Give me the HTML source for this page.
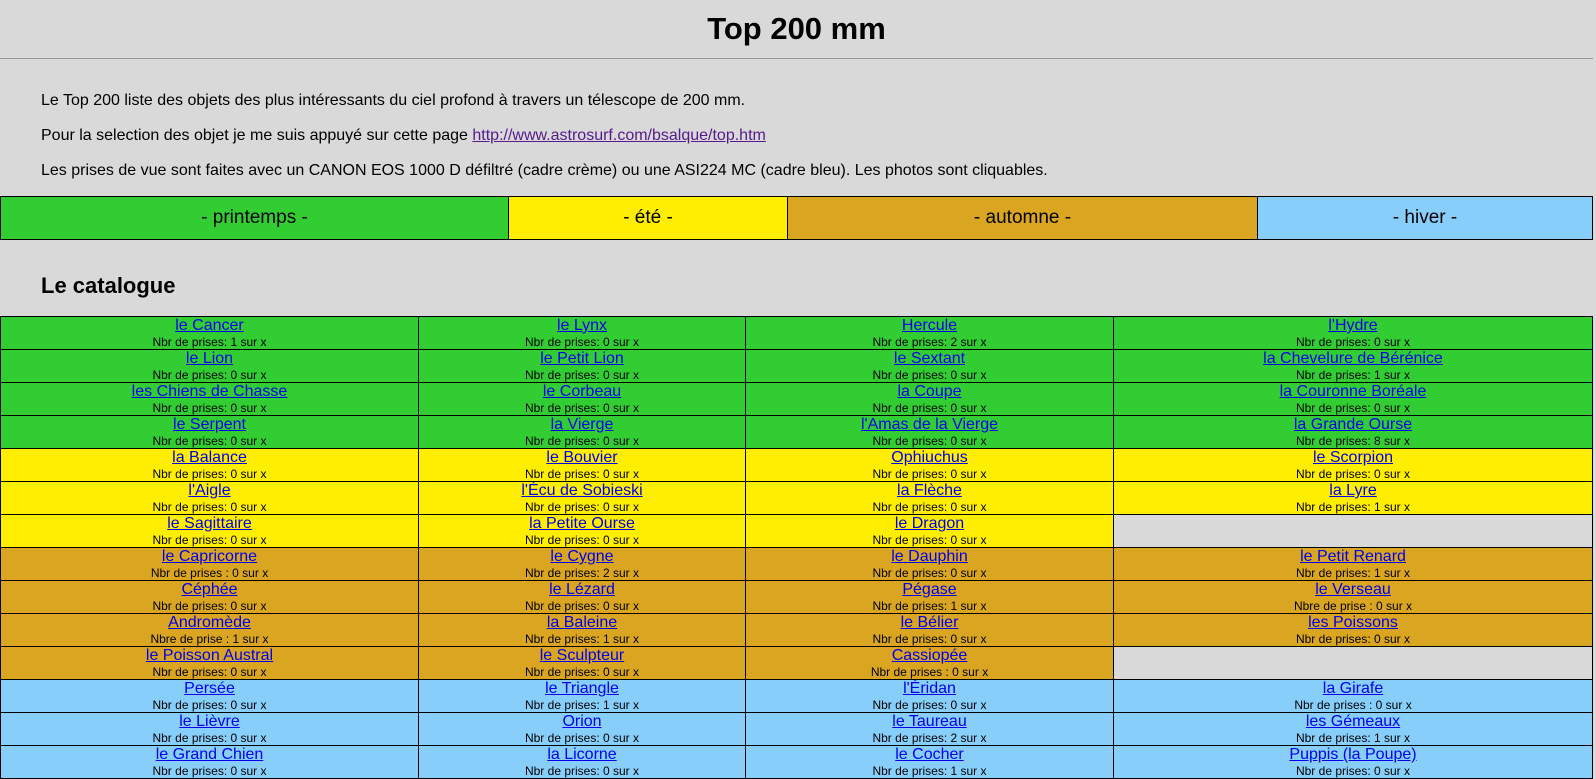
<!DOCTYPE html>
<html><head><meta charset="utf-8"><style>
html,body{margin:0;padding:0;background:#d9d9d9;font-family:"Liberation Sans",Arial,sans-serif;}
body{width:1593px;overflow:hidden;height:777px}
h1{margin:0;height:58px;line-height:58px;text-align:center;font-size:31px;font-weight:bold;border-bottom:1px solid #999;}
p{margin:0;padding-left:41px;font-size:16px;position:absolute;}
a{color:#0000ee}
.s{position:absolute;top:196px;left:0;width:1593px;height:44px;border-collapse:collapse;}
.s td{border:1px solid #000;text-align:center;font-size:19px;padding:0}
h2{position:absolute;top:273px;left:41px;margin:0;font-size:22px;}
.c{position:absolute;top:316px;left:0;width:1593px;border-collapse:collapse;table-layout:fixed}
.c td{border:1px solid #000;text-align:center;padding:0;height:31px;vertical-align:top;overflow:hidden}
.c a{font-size:16px;display:block;line-height:18px}
.c span{font-size:12px;display:block;line-height:14px}
.g td{background:#32cd32}.y td{background:#ffee00}.o td{background:#daa520}.b td{background:#87cefa}
.c td.e{background:#d9d9d9}
</style></head><body>
<h1>Top 200 mm</h1>
<p style="top:92px">Le Top 200 liste des objets des plus intéressants du ciel profond à travers un télescope de 200 mm.</p>
<p style="top:127px">Pour la selection des objet je me suis appuyé sur cette page <a style="color:#551a8b" href="#">http://www.astrosurf.com/bsalque/top.htm</a></p>
<p style="top:162px">Les prises de vue sont faites avec un CANON EOS 1000 D défiltré (cadre crème) ou une ASI224 MC (cadre bleu). Les photos sont cliquables.</p>
<table class="s"><tr><td style="width:507px;background:#32cd32">- printemps -</td><td style="width:278px;background:#ffee00">- été -</td><td style="width:469px;background:#daa520">- automne -</td><td style="background:#87cefa">- hiver -</td></tr></table>
<h2>Le catalogue</h2>
<table class="c">
<colgroup><col style="width:418px"><col style="width:327px"><col style="width:368px"><col></colgroup>
<tr class="g"><td><a href="#">le Cancer</a><span>Nbr de prises: 1 sur x</span></td><td><a href="#">le Lynx</a><span>Nbr de prises: 0 sur x</span></td><td><a href="#">Hercule</a><span>Nbr de prises: 2 sur x</span></td><td><a href="#">l'Hydre</a><span>Nbr de prises: 0 sur x</span></td></tr>
<tr class="g"><td><a href="#">le Lion</a><span>Nbr de prises: 0 sur x</span></td><td><a href="#">le Petit Lion</a><span>Nbr de prises: 0 sur x</span></td><td><a href="#">le Sextant</a><span>Nbr de prises: 0 sur x</span></td><td><a href="#">la Chevelure de Bérénice</a><span>Nbr de prises: 1 sur x</span></td></tr>
<tr class="g"><td><a href="#">les Chiens de Chasse</a><span>Nbr de prises: 0 sur x</span></td><td><a href="#">le Corbeau</a><span>Nbr de prises: 0 sur x</span></td><td><a href="#">la Coupe</a><span>Nbr de prises: 0 sur x</span></td><td><a href="#">la Couronne Boréale</a><span>Nbr de prises: 0 sur x</span></td></tr>
<tr class="g"><td><a href="#">le Serpent</a><span>Nbr de prises: 0 sur x</span></td><td><a href="#">la Vierge</a><span>Nbr de prises: 0 sur x</span></td><td><a href="#">l'Amas de la Vierge</a><span>Nbr de prises: 0 sur x</span></td><td><a href="#">la Grande Ourse</a><span>Nbr de prises: 8 sur x</span></td></tr>
<tr class="y"><td><a href="#">la Balance</a><span>Nbr de prises: 0 sur x</span></td><td><a href="#">le Bouvier</a><span>Nbr de prises: 0 sur x</span></td><td><a href="#">Ophiuchus</a><span>Nbr de prises: 0 sur x</span></td><td><a href="#">le Scorpion</a><span>Nbr de prises: 0 sur x</span></td></tr>
<tr class="y"><td><a href="#">l'Aigle</a><span>Nbr de prises: 0 sur x</span></td><td><a href="#">l'Écu de Sobieski</a><span>Nbr de prises: 0 sur x</span></td><td><a href="#">la Flèche</a><span>Nbr de prises: 0 sur x</span></td><td><a href="#">la Lyre</a><span>Nbr de prises: 1 sur x</span></td></tr>
<tr class="y"><td><a href="#">le Sagittaire</a><span>Nbr de prises: 0 sur x</span></td><td><a href="#">la Petite Ourse</a><span>Nbr de prises: 0 sur x</span></td><td><a href="#">le Dragon</a><span>Nbr de prises: 0 sur x</span></td><td class="e"></td></tr>
<tr class="o"><td><a href="#">le Capricorne</a><span>Nbr de prises : 0 sur x</span></td><td><a href="#">le Cygne</a><span>Nbr de prises: 2 sur x</span></td><td><a href="#">le Dauphin</a><span>Nbr de prises: 0 sur x</span></td><td><a href="#">le Petit Renard</a><span>Nbr de prises: 1 sur x</span></td></tr>
<tr class="o"><td><a href="#">Céphée</a><span>Nbr de prises: 0 sur x</span></td><td><a href="#">le Lézard</a><span>Nbr de prises: 0 sur x</span></td><td><a href="#">Pégase</a><span>Nbr de prises: 1 sur x</span></td><td><a href="#">le Verseau</a><span>Nbre de prise : 0 sur x</span></td></tr>
<tr class="o"><td><a href="#">Andromède</a><span>Nbre de prise : 1 sur x</span></td><td><a href="#">la Baleine</a><span>Nbr de prises: 1 sur x</span></td><td><a href="#">le Bélier</a><span>Nbr de prises: 0 sur x</span></td><td><a href="#">les Poissons</a><span>Nbr de prises: 0 sur x</span></td></tr>
<tr class="o"><td><a href="#">le Poisson Austral</a><span>Nbr de prises: 0 sur x</span></td><td><a href="#">le Sculpteur</a><span>Nbr de prises: 0 sur x</span></td><td><a href="#">Cassiopée</a><span>Nbr de prises : 0 sur x</span></td><td class="e"></td></tr>
<tr class="b"><td><a href="#">Persée</a><span>Nbr de prises: 0 sur x</span></td><td><a href="#">le Triangle</a><span>Nbr de prises: 1 sur x</span></td><td><a href="#">l'Éridan</a><span>Nbr de prises: 0 sur x</span></td><td><a href="#">la Girafe</a><span>Nbr de prises : 0 sur x</span></td></tr>
<tr class="b"><td><a href="#">le Lièvre</a><span>Nbr de prises: 0 sur x</span></td><td><a href="#">Orion</a><span>Nbr de prises: 0 sur x</span></td><td><a href="#">le Taureau</a><span>Nbr de prises: 2 sur x</span></td><td><a href="#">les Gémeaux</a><span>Nbr de prises: 1 sur x</span></td></tr>
<tr class="b"><td><a href="#">le Grand Chien</a><span>Nbr de prises: 0 sur x</span></td><td><a href="#">la Licorne</a><span>Nbr de prises: 0 sur x</span></td><td><a href="#">le Cocher</a><span>Nbr de prises: 1 sur x</span></td><td><a href="#">Puppis (la Poupe)</a><span>Nbr de prises: 0 sur x</span></td></tr>
</table>
</body></html>
